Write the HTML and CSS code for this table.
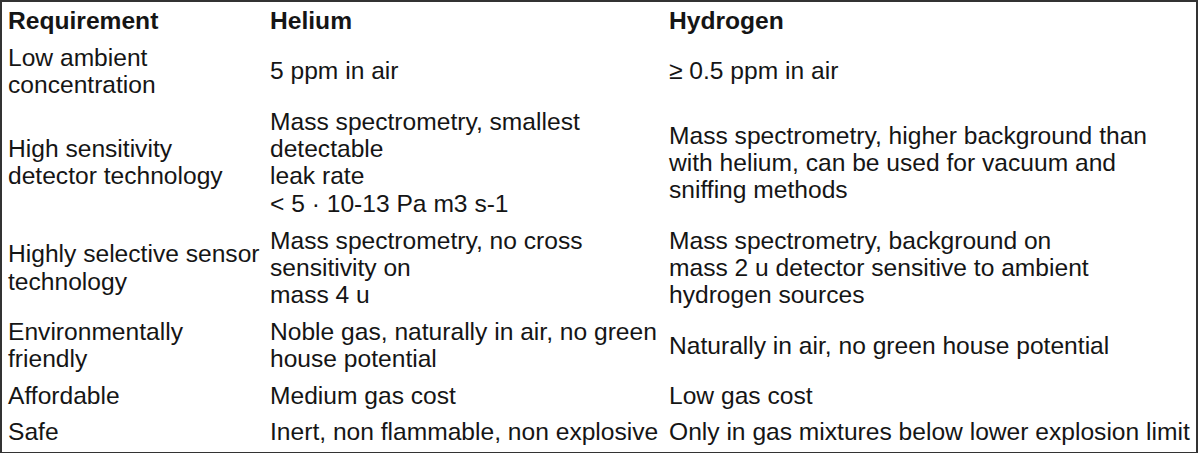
FILE: index.html
```html
<!DOCTYPE html>
<html>
<head>
<meta charset="utf-8">
<link rel="stylesheet" href="styles.css">
</head>
<body>
<table class="req">
  <colgroup>
    <col class="c1"><col class="c2"><col class="c3">
  </colgroup>
  <thead>
    <tr class="head">
      <th>Requirement</th>
      <th>Helium</th>
      <th>Hydrogen</th>
    </tr>
  </thead>
  <tbody>
    <tr>
      <td>Low ambient<br>concentration</td>
      <td>5 ppm in air</td>
      <td>≥ 0.5 ppm in air</td>
    </tr>
    <tr>
      <td>High sensitivity<br>detector technology</td>
      <td>Mass spectrometry, smallest<br>detectable<br>leak rate<br>&lt; 5 · 10-13 Pa m3 s-1</td>
      <td>Mass spectrometry, higher background than<br>with helium, can be used for vacuum and<br>sniffing methods</td>
    </tr>
    <tr>
      <td>Highly selective sensor<br>technology</td>
      <td>Mass spectrometry, no cross<br>sensitivity on<br>mass 4 u</td>
      <td>Mass spectrometry, background on<br>mass 2 u detector sensitive to ambient<br>hydrogen sources</td>
    </tr>
    <tr>
      <td>Environmentally<br>friendly</td>
      <td>Noble gas, naturally in air, no green<br>house potential</td>
      <td>Naturally in air, no green house potential</td>
    </tr>
    <tr>
      <td>Affordable</td>
      <td>Medium gas cost</td>
      <td>Low gas cost</td>
    </tr>
    <tr class="last">
      <td>Safe</td>
      <td>Inert, non flammable, non explosive</td>
      <td>Only in gas mixtures below lower explosion limit</td>
    </tr>
  </tbody>
</table>
</body>
</html>
```

FILE: styles.css
```css
html, body {
  margin: 0;
  padding: 0;
  background: #ffffff;
}

.req {
  width: 1198px;
  border-collapse: collapse;
  border: 2px solid #333333;
  table-layout: fixed;
  font-family: "Liberation Sans", Arial, sans-serif;
  font-size: 24.6px;
  line-height: 27.3px;
  color: #151515;
}

.c1 { width: 263px; }
.c2 { width: 399px; }
.c3 { width: auto; }

.req th,
.req td {
  padding: 4.8px 0 4.8px 6px;
  text-align: left;
  vertical-align: middle;
  white-space: nowrap;
}

.req .last td {
  padding-top: 3.8px;
  padding-bottom: 6.8px;
}

.req th {
  font-weight: bold;
  vertical-align: top;
}
```
